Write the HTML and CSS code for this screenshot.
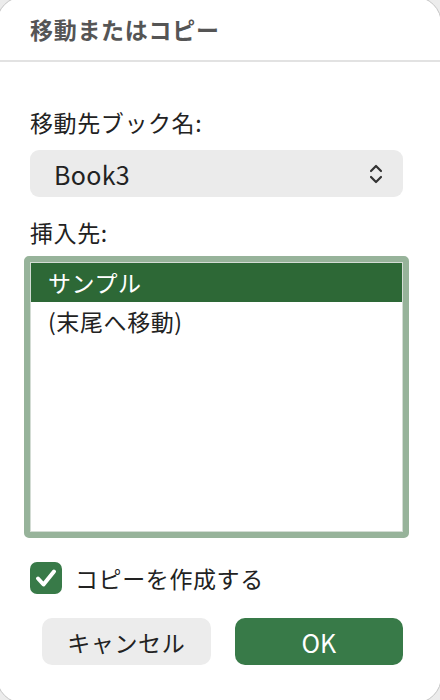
FILE: index.html
```html
<!DOCTYPE html>
<html lang="ja">
<head>
<meta charset="utf-8">
<title>移動またはコピー</title>
<link rel="stylesheet" href="styles.css">
</head>
<body>
<div class="dialog">
  <div class="header"><span class="title">移動またはコピー</span></div>
  <div class="content">
    <div class="label label-book">移動先ブック名:</div>
    <div class="select">
      <span class="select-value">Book3</span>
      <svg class="chevron" width="14" height="22" viewBox="0 0 14 22"><path d="M2 8 L7 3 L12 8" fill="none" stroke="#333" stroke-width="2.2" stroke-linecap="round" stroke-linejoin="round"/><path d="M2 14 L7 19 L12 14" fill="none" stroke="#333" stroke-width="2.2" stroke-linecap="round" stroke-linejoin="round"/></svg>
    </div>
    <div class="label label-insert">挿入先:</div>
    <div class="listbox">
      <div class="list-inner">
        <div class="row selected">サンプル</div>
        <div class="row">(末尾へ移動)</div>
      </div>
    </div>
    <div class="check-row">
      <span class="checkbox"><svg width="32" height="32" viewBox="0 0 32 32"><path d="M8 16.5 L13.5 22.5 L24 9.5" fill="none" stroke="#fff" stroke-width="4" stroke-linecap="round" stroke-linejoin="round"/></svg></span>
      <span class="check-label">コピーを作成する</span>
    </div>
    <div class="buttons">
      <button class="btn btn-cancel">キャンセル</button>
      <button class="btn btn-ok">OK</button>
    </div>
  </div>
</div>
</body>
</html>
```
FILE: styles.css
```css
html, body {
  margin: 0;
  padding: 0;
  background: #ececec;
  overflow: hidden;
}
body {
  font-family: "Noto Sans CJK JP", "Noto Sans", sans-serif;
  color: #222;
}
.dialog {
  margin: -4px 0 0 -4px;
  width: 446px;
  height: 708px;
  box-sizing: border-box;
  background: #fff;
  border: 1px solid #c4c4c4;
  border-radius: 28px;
  overflow: hidden;
}
.header {
  height: 63px;
  display: flex;
  align-items: center;
  padding-left: 33px;
  border-bottom: 2px solid #e2e2e2;
}
.title {
  font-size: 23px;
  font-weight: 700;
  color: #555;
  letter-spacing: 0.7px;
}
.content {
  padding: 0 38px 0 33px;
}
.label {
  font-size: 23px;
  line-height: 30px;
  height: 30px;
  letter-spacing: 0.6px;
  color: #222;
}
.label-book { margin-top: 45px; }
.label-insert { margin-top: 20px; }
.select {
  margin-top: 13px;
  height: 47px;
  background: #ebebeb;
  border-radius: 9px;
  display: flex;
  align-items: center;
  justify-content: space-between;
  padding: 0 20px 0 24px;
}
.select-value {
  font-size: 25px;
  letter-spacing: 0.3px;
  color: #222;
}
.chevron { display: block; margin-top: 1px; }
.listbox {
  margin: 9px -6px 0 -6px;
  height: 282px;
  box-sizing: border-box;
  border: 6px solid #97b39a;
  border-radius: 5px;
}
.list-inner {
  height: 100%;
  box-sizing: border-box;
  border: 1px solid #d3dcd4;
  background: #fff;
}
.row {
  height: 39px;
  line-height: 39px;
  padding-left: 17px;
  font-size: 23px;
  letter-spacing: 0.6px;
  color: #222;
}
.row.selected {
  background: #2d6836;
  color: #fff;
}
.check-row {
  margin-top: 24px;
  height: 32px;
  display: flex;
  align-items: center;
  gap: 13px;
}
.checkbox {
  width: 32px;
  height: 32px;
  border-radius: 7px;
  background: #387a48;
  display: block;
}
.checkbox svg { display: block; }
.check-label {
  font-size: 23px;
  letter-spacing: 0.6px;
  color: #222;
}
.buttons {
  margin: 24px 0 0 12px;
  display: grid;
  grid-template-columns: 1fr 1fr;
  gap: 24px;
}
.btn {
  height: 47px;
  border: none;
  border-radius: 10px;
  font-family: "Noto Sans CJK JP", "Noto Sans", sans-serif;
  font-size: 23px;
  letter-spacing: 0.6px;
  padding: 0;
}
.btn-cancel {
  background: #ececec;
  color: #222;
}
.btn-ok {
  background: #387a48;
  color: #fff;
  font-size: 25px;
  font-weight: 400;
  letter-spacing: 0;
}
```
